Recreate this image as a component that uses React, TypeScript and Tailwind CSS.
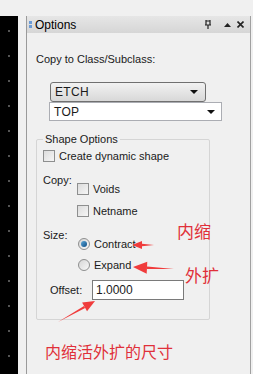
import React from 'react';

const ui = { fontFamily: '"Liberation Sans", Arial, sans-serif' };
const cjk = { fontFamily: '"Noto Sans CJK SC", sans-serif' };

function CheckBox({ label }: { label: string }) {
  return (
    <div className="flex items-center gap-[4px] h-[12px]">
      <div className="w-[12px] h-[12px] border border-[#8e8f8f] bg-gradient-to-br from-[#dcdcdc] to-[#f6f6f6]" />
      <span>{label}</span>
    </div>
  );
}

function Radio({ label, checked }: { label: string; checked?: boolean }) {
  return (
    <div className="flex items-center gap-[4px] h-[12px]">
      <div className="w-[12px] h-[12px] rounded-full border border-[#8e8f8f] bg-gradient-to-br from-[#d6d6d6] to-[#f8f8f8] flex items-center justify-center">
        {checked && <div className="w-[6px] h-[6px] rounded-full bg-gradient-to-br from-[#5aa7d8] to-[#0d4f86]" />}
      </div>
      <span>{label}</span>
    </div>
  );
}

function Arrow({ x1, y1, x2, y2, w = 5, l = 11 }: { x1: number; y1: number; x2: number; y2: number; w?: number; l?: number }) {
  const a = Math.atan2(y2 - y1, x2 - x1);
  const bx = x2 - l * Math.cos(a), by = y2 - l * Math.sin(a);
  const px = -Math.sin(a) * w, py = Math.cos(a) * w;
  const px2 = -Math.sin(a) * 1.2, py2 = Math.cos(a) * 1.2;
  return (
    <g fill="#f03c3c">
      <polygon points={`${x1},${y1} ${bx + px2},${by + py2} ${bx - px2},${by - py2}`} />
      <polygon points={`${x2},${y2} ${bx + px},${by + py} ${bx - px},${by - py}`} />
    </g>
  );
}

export default function App() {
  return (
    <div className="relative w-[253px] h-[374px] bg-[#f0f0f0] text-[11px] leading-[14px] text-[#1a1a1a] overflow-hidden" style={ui}>
      <div className="h-[16px]" />
      <div className="flex h-[358px]">
        <div className="w-[18px] bg-black flex flex-col items-center gap-[23px] pt-[14px]">
          {Array.from({ length: 14 }).map((_, i) => (
            <div key={i} className="w-[2px] h-[2px] bg-[#555]" />
          ))}
        </div>
        <div className="w-[8px]" />
        <div className="w-[1px] bg-[#9a9a9a]" />
        <div className="w-[223px] flex flex-col">
          <div className="h-[17px] flex items-center bg-gradient-to-b from-[#e6e6e6] to-[#d6d6d6] pl-[2px] pr-[6px]">
            <div className="flex flex-col gap-[1px] mr-[3px]">
              <div className="w-[3px] h-[3px] bg-[#6b9bd6]" />
              <div className="w-[3px] h-[3px] bg-[#6b9bd6]" />
            </div>
            <span className="text-[12px] text-black">Options</span>
            <div className="flex-1" />
            <svg width="8" height="9" viewBox="0 0 8 9" className="mr-[12px]">
              <path d="M2 0v5M6 0v5M2 1h4M1 5h6M4 5v4" stroke="#222" strokeWidth="1.2" fill="none" />
            </svg>
            <svg width="7" height="4" viewBox="0 0 7 4" className="mr-[6px]">
              <polygon points="3.5,0 7,4 0,4" fill="#222" />
            </svg>
            <svg width="7" height="7" viewBox="0 0 7 7">
              <path d="M0.5 0.5l6 6M6.5 0.5l-6 6" stroke="#222" strokeWidth="1.6" />
            </svg>
          </div>
          <div className="flex-1 pl-[9px] pt-[19px]">
            <div>Copy to Class/Subclass:</div>
            <div className="ml-[14px] mt-[16px] w-[156px] h-[20px] rounded-[3px] border border-[#707070] bg-gradient-to-b from-[#f2f2f2] to-[#d8d8d8] flex items-center px-[4px]">
              <span className="flex-1 text-[12px] tracking-[0.3px]">ETCH</span>
              <svg width="8" height="4" viewBox="0 0 8 4" className="mr-[3px]"><polygon points="0,0 8,0 4,4" fill="#111" /></svg>
            </div>
            <div className="ml-[13px] w-[173px] h-[19px] border border-[#abadb3] bg-white flex items-center px-[4px]">
              <span className="flex-1 text-[12px] tracking-[0.3px]">TOP</span>
              <svg width="8" height="4" viewBox="0 0 8 4" className="mr-[2px]"><polygon points="0,0 8,0 4,4" fill="#111" /></svg>
            </div>
            <div className="relative mt-[18px] w-[174px] h-[181px] border border-[#d5d5d5] rounded-[2px] pl-[6px] pt-[10px]">
              <div className="absolute -top-[8px] left-[6px] bg-[#f0f0f0] px-[2px] leading-[14px]">Shape Options</div>
              <CheckBox label="Create dynamic shape" />
              <div className="mt-[11px]">Copy:</div>
              <div className="ml-[34px] -mt-[4px] flex flex-col gap-[10px]">
                <CheckBox label="Voids" />
                <CheckBox label="Netname" />
              </div>
              <div className="mt-[11px]">Size:</div>
              <div className="ml-[35px] -mt-[4px] flex flex-col gap-[9px]">
                <Radio label="Contract" checked />
                <Radio label="Expand" />
              </div>
              <div className="flex items-center mt-[9px] ml-[7px]">
                <span className="w-[42px]">Offset:</span>
                <div className="w-[92px] h-[20px] border border-[#7a7a7a] bg-white flex items-center px-[3px] text-[12px]">1.0000</div>
              </div>
            </div>
          </div>
        </div>
        <div className="w-[1px] bg-[#a0a0a0]" />
        <div className="w-[2px]" />
      </div>

      <div className="absolute left-[177px] top-[222px] text-[17px] text-[#e0303a] leading-none" style={cjk}>内缩</div>
      <div className="absolute left-[185px] top-[266px] text-[17px] text-[#e0303a] leading-none" style={cjk}>外扩</div>
      <div className="absolute left-[45px] top-[343px] text-[16px] text-[#e0303a] leading-none" style={cjk}>内缩活外扩的尺寸</div>
      <svg className="absolute left-0 top-0 pointer-events-none" width="253" height="374">
        <Arrow x1={154} y1={245} x2={132} y2={245} w={4} l={10} />
        <Arrow x1={174} y1={269} x2={133} y2={267} w={6} l={14} />
        <Arrow x1={58} y1={322} x2={95} y2={301} w={5} l={12} />
      </svg>
    </div>
  );
}
